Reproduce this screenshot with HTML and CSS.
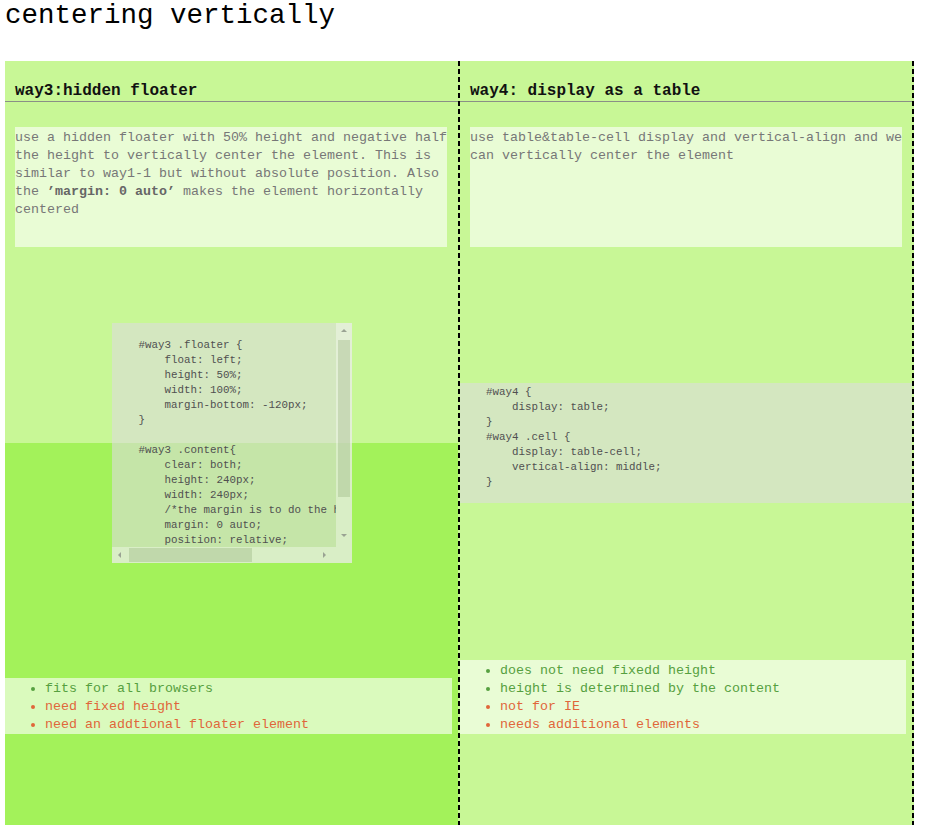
FILE: index.html
```html
<!DOCTYPE html>
<html>
<head>
<meta charset="utf-8">
<title>centering vertically</title>
<link rel="stylesheet" href="styles.css">
</head>
<body>
<h1 class="page-title">centering vertically</h1>
<div class="demo">
  <section class="way way3">
    <h2 class="way-title">way3:hidden floater</h2>
    <p class="desc">use a hidden floater with 50% height and negative half the height to vertically center the element. This is similar to way1-1 but without absolute position. Also the <b>’margin: 0 auto’</b> makes the element horizontally centered</p>
    <div class="stage stage3">
      <div class="scrollbox">
        <pre class="code code-scroll">    #way3 .floater {
        float: left;
        height: 50%;
        width: 100%;
        margin-bottom: -120px;
    }

    #way3 .content{
        clear: both;
        height: 240px;
        width: 240px;
        /*the margin is to do the horizontal centering*/
        margin: 0 auto;
        position: relative;
    }</pre>
        <div class="vbar">
          <span class="sb-btn"><span class="arr arr-up"></span></span>
          <span class="vtrack"><span class="vthumb"></span></span>
          <span class="sb-btn sb-end"><span class="arr arr-down"></span></span>
        </div>
        <div class="hbar">
          <span class="sb-btn"><span class="arr arr-left"></span></span>
          <span class="htrack"><span class="hthumb"></span></span>
          <span class="sb-btn sb-end"><span class="arr arr-right"></span></span>
        </div>
        <div class="corner"></div>
      </div>
      <ul class="notes notes3">
        <li class="pro">fits for all browsers</li>
        <li class="con">need fixed height</li>
        <li class="con">need an addtional floater element</li>
      </ul>
    </div>
  </section>
  <div class="divider"></div>
  <section class="way way4">
    <h2 class="way-title">way4: display as a table</h2>
    <p class="desc">use table&amp;table-cell display and vertical-align and we can vertically center the element</p>
    <div class="stage stage4">
      <pre class="code code-table">    #way4 {
        display: table;
    }
    #way4 .cell {
        display: table-cell;
        vertical-align: middle;
    }
</pre>
      <ul class="notes notes4">
        <li class="pro">does not need fixedd height</li>
        <li class="pro">height is determined by the content</li>
        <li class="con">not for IE</li>
        <li class="con">needs additional elements</li>
      </ul>
    </div>
  </section>
  <div class="divider"></div>
</div>
</body>
</html>
```
FILE: styles.css
```css
html, body {
  background: #fff;
}
body {
  margin: 0 5px;
  font-family: "Liberation Mono", "DejaVu Sans Mono", monospace;
  color: #000;
}
.page-title {
  margin: 0 0 30px;
  font-size: 27.5px;
  line-height: 31px;
  font-weight: normal;
}
.demo {
  display: flex;
  width: 909px;
  height: 764px;
  background: #c8f796;
}
.way {
  display: flex;
  flex-direction: column;
}
.way3 { width: 453px; }
.way4 { width: 452px; }
.divider {
  width: 2px;
  background: repeating-linear-gradient(to bottom, #000 0 5px, transparent 5px 8px);
}
.way-title {
  margin: 0;
  padding: 21px 0 0 10px;
  font-size: 16px;
  line-height: 19px;
  font-weight: bold;
  color: #111;
  border-bottom: 1px solid #8a8f86;
}
.desc {
  margin: 25px 0 0 10px;
  width: 432px;
  height: 120px;
  box-sizing: border-box;
  padding-top: 2px;
  background: rgba(255, 255, 255, 0.6);
  font-size: 13.33px;
  line-height: 18px;
  color: #777;
}
.desc b {
  color: #666;
}
.stage {
  flex: 1;
  display: flex;
  flex-direction: column;
}
.stage3 {
  padding-top: 76px;
  background: linear-gradient(to bottom, transparent 0 196px, #a3f25a 196px);
}
.code {
  margin: 0;
  font-family: "Liberation Mono", "DejaVu Sans Mono", monospace;
  font-size: 10.83px;
  line-height: 15px;
  color: #505050;
}
.scrollbox {
  align-self: center;
  width: 240px;
  height: 240px;
  display: grid;
  grid-template-columns: 224px 16px;
  grid-template-rows: 224px 16px;
  background: rgba(220, 220, 220, 0.6);
}
.code-scroll {
  overflow: hidden;
  padding: 15px 0 0 1px;
  white-space: pre;
}
.vbar {
  display: flex;
  flex-direction: column;
  background: rgba(255, 255, 255, 0.35);
}
.hbar {
  display: flex;
  background: rgba(255, 255, 255, 0.35);
}
.corner {
  background: rgba(255, 255, 255, 0.35);
}
.sb-btn {
  flex: 0 0 15px;
  display: flex;
  align-items: center;
  justify-content: center;
}
.vbar .sb-end { margin-bottom: 4px; }
.hbar .sb-end { margin-right: 4px; }
.vtrack {
  flex: 1;
  padding: 2px 2px 0 2px;
}
.vthumb {
  display: block;
  height: 157px;
  background: rgba(130, 160, 100, 0.28);
}
.htrack {
  flex: 1;
  display: flex;
  padding: 1px 0 1px 2px;
}
.hthumb {
  display: block;
  width: 123px;
  background: rgba(130, 160, 100, 0.28);
}
.arr {
  width: 0;
  height: 0;
  border: 3.5px solid transparent;
}
.arr-up { border-bottom-color: #9aa393; border-top-width: 0; }
.arr-down { border-top-color: #9aa393; border-bottom-width: 0; }
.arr-left { border-right-color: #9aa393; border-left-width: 0; }
.arr-right { border-left-color: #9aa393; border-right-width: 0; }
.code-table {
  margin-top: 136px;
  height: 120px;
  box-sizing: border-box;
  padding-top: 2px;
  background: rgba(220, 220, 220, 0.6);
  white-space: pre;
  overflow: hidden;
}
.notes {
  margin: 0;
  padding: 2px 0 0 40px;
  list-style: disc;
  font-size: 13.33px;
  line-height: 18px;
  background: rgba(255, 255, 255, 0.6);
}
.notes3 {
  margin-top: 115px;
  margin-right: 6px;
}
.notes4 {
  margin-top: 157px;
  margin-right: 6px;
}
.pro { color: #56a040; }
.con { color: #e0663a; }
```
